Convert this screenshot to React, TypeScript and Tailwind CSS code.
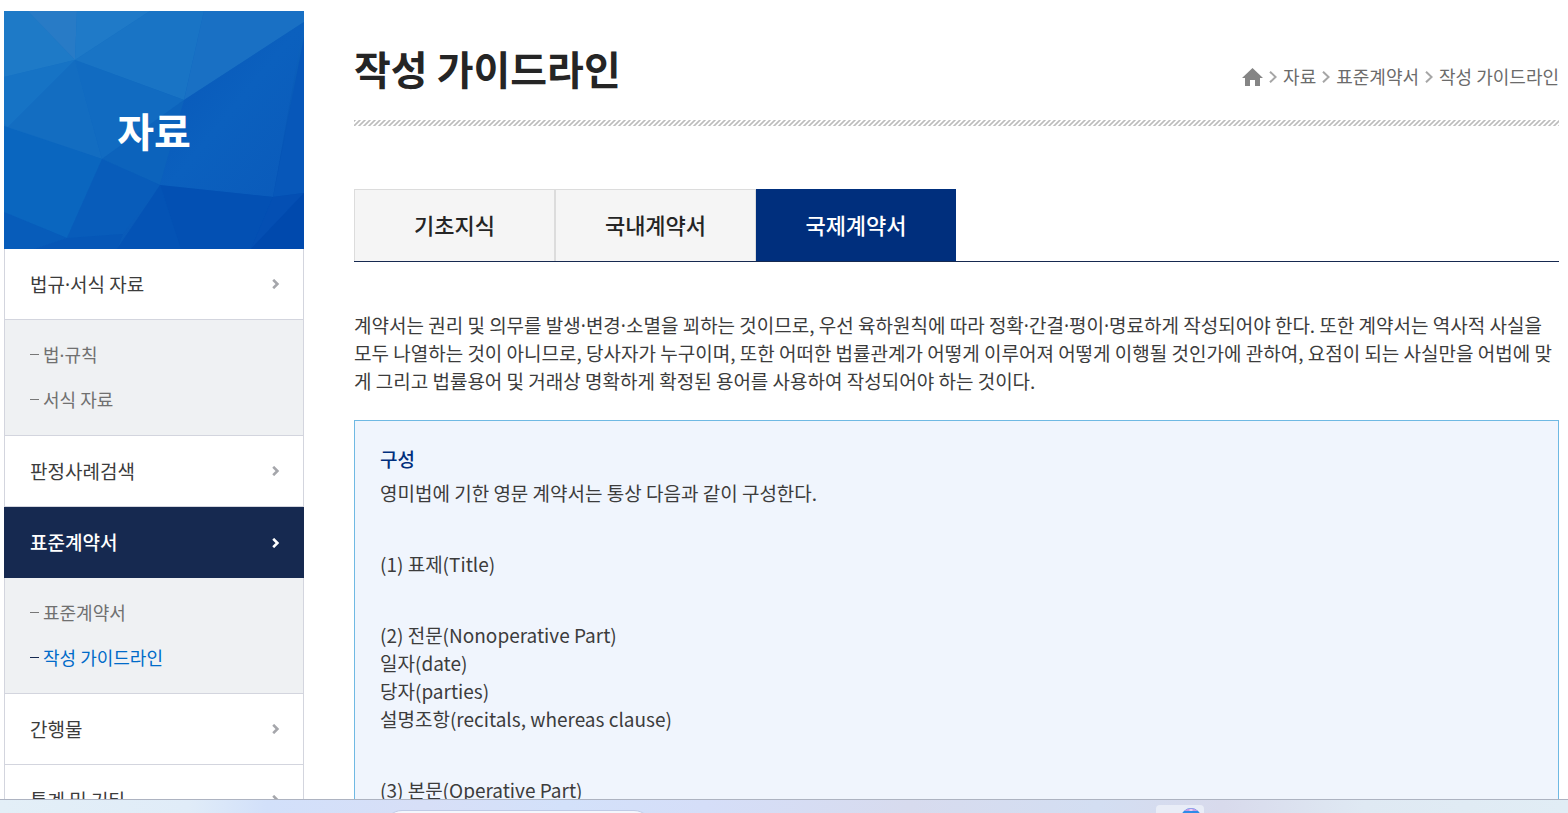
import React from "react";

type MenuItem = { label: string; active?: boolean; children?: { label: string; active?: boolean }[] };

const menu: MenuItem[] = [
  { label: "법규·서식 자료", children: [{ label: "법·규칙" }, { label: "서식 자료" }] },
  { label: "판정사례검색" },
  {
    label: "표준계약서",
    active: true,
    children: [{ label: "표준계약서" }, { label: "작성 가이드라인", active: true }],
  },
  { label: "간행물" },
  { label: "통계 및 기타" },
];

const tabs = [{ label: "기초지식" }, { label: "국내계약서" }, { label: "국제계약서", active: true }];

const intro =
  "계약서는 권리 및 의무를 발생·변경·소멸을 꾀하는 것이므로, 우선 육하원칙에 따라 정확·간결·평이·명료하게 작성되어야 한다. 또한 계약서는 역사적 사실을 모두 나열하는 것이 아니므로, 당사자가 누구이며, 또한 어떠한 법률관계가 어떻게 이루어져 어떻게 이행될 것인가에 관하여, 요점이 되는 사실만을 어법에 맞게 그리고 법률용어 및 거래상 명확하게 확정된 용어를 사용하여 작성되어야 하는 것이다.";

const sections = [
  ["(1) 표제(Title)"],
  ["(2) 전문(Nonoperative Part)", "일자(date)", "당자(parties)", "설명조항(recitals, whereas clause)"],
  ["(3) 본문(Operative Part)"],
];

// Sets the middle dot in a Latin face, whose dot is narrower than the Korean one.
function DotText({ text }: { text: string }) {
  return (
    <span>
      {text.split("·").map((part, i) => (
        <React.Fragment key={i}>
          {i > 0 && <span className="font-['Noto_Sans',sans-serif] leading-none">·</span>}
          {part}
        </React.Fragment>
      ))}
    </span>
  );
}

function BannerArt() {
  return (
    <svg className="absolute inset-0 h-full w-full" viewBox="0 0 300 238" preserveAspectRatio="none" aria-hidden="true">
      <defs>
        <linearGradient id="base" x1="0" y1="0" x2="1" y2="1">
          <stop offset="0" stopColor="#1b7ac8" />
          <stop offset="0.5" stopColor="#0d64be" />
          <stop offset="1" stopColor="#0048ae" />
        </linearGradient>
        <linearGradient id="right" x1="0" y1="0" x2="1" y2="1">
          <stop offset="0" stopColor="#0756b8" />
          <stop offset="0.5" stopColor="#0b60be" />
          <stop offset="1" stopColor="#0a5aba" />
        </linearGradient>
      </defs>
      <rect width="300" height="238" fill="url(#base)" />
      <path d="M0 0H24L71 49L0 66Z" fill="#1e7ac7" />
      <path d="M24 0H73L71 49Z" fill="#287bc6" />
      <path d="M73 0H146L71 49Z" fill="#1f7ac8" />
      <path d="M146 0H200L180 89L71 49Z" fill="#1974c5" />
      <path d="M200 0H300V11L180 89Z" fill="#1970c4" />
      <path d="M0 66L71 49L4 116L0 113Z" fill="#1673c5" />
      <path d="M71 49L98 148L4 116Z" fill="#136dc1" />
      <path d="M71 49L180 89L98 148Z" fill="#116bc1" />
      <path d="M180 89L156 174L98 148Z" fill="#0c63bc" />
      <path d="M180 89L300 11L269 186L156 174Z" fill="url(#right)" />
      <path d="M300 26V182L269 186Z" fill="#0757b9" />
      <path d="M0 115L98 148L63 227L0 201Z" fill="#0a66bf" />
      <path d="M98 148L156 174L119 223L63 227Z" fill="#085cba" />
      <path d="M0 201L63 227L30 238H0Z" fill="#075cba" />
      <path d="M63 227L119 223L113 238H30Z" fill="#0657b7" />
      <path d="M156 174L177 238H113Z" fill="#0453b5" />
      <path d="M156 174L269 186L247 238H177Z" fill="#0350b3" />
      <path d="M269 186L300 182L247 238Z" fill="#044fb3" />
      <path d="M300 182V238H247Z" fill="#0049ad" />
    </svg>
  );
}

function MenuArrow() {
  return (
    <svg width="8" height="10" viewBox="0 0 8 10" fill="none" stroke="currentColor" strokeWidth="2.6" aria-hidden="true">
      <path d="M1.2 0.8L5.4 5L1.2 9.2" />
    </svg>
  );
}

function Separator() {
  return (
    <svg width="8" height="12" viewBox="0 0 8 12" fill="none" stroke="#a6a6a6" strokeWidth="2" aria-hidden="true">
      <path d="M1 0.7L6.6 6L1 11.3" />
    </svg>
  );
}

function Sidebar() {
  return (
    <aside className="w-[300px] shrink-0">
      <div className="relative flex h-[238px] items-center justify-center">
        <BannerArt />
        <h2 className="relative text-[40px] leading-[48px] font-bold text-white">자료</h2>
      </div>
      <nav aria-label="자료">
        <ul>
          {menu.map((item) => (
            <li key={item.label}>
              <a
                href="#"
                className={
                  item.active
                    ? "flex h-[71px] items-center justify-between bg-[#162950] pr-6 pl-[26px] text-[19px] font-medium text-white"
                    : "flex h-[71px] items-center justify-between border-x border-b border-[#d3d5de] bg-white pr-[23px] pl-[25px] text-[19px] text-[#3c3c3c]"
                }
              >
                <DotText text={item.label} />
                <span className={item.active ? "text-white" : "text-[#a5a6ab]"}>
                  <MenuArrow />
                </span>
              </a>
              {item.children && (
                <ul className="border-x border-b border-[#d3d5de] bg-[#eff1f3] px-[25px] pt-3 pb-[13px]">
                  {item.children.map((child) => (
                    <li key={child.label}>
                      <a
                        href="#"
                        className={
                          child.active
                            ? "flex h-[45px] items-center gap-1 text-[#006bc9]"
                            : "flex h-[45px] items-center gap-1 text-[#707070]"
                        }
                      >
                        <span className={child.active ? "h-px w-[9px] bg-[#162950]" : "h-px w-[9px] bg-[#777]"} />
                        <DotText text={child.label} />
                      </a>
                    </li>
                  ))}
                </ul>
              )}
            </li>
          ))}
        </ul>
      </nav>
    </aside>
  );
}

function Breadcrumb() {
  return (
    <nav aria-label="현재 위치" className="mt-[18px] flex items-center gap-1.5 text-[#6b6b6b]">
      <a href="#" aria-label="홈">
        <svg width="21" height="18" viewBox="0 0 21 18" fill="#858585" aria-hidden="true">
          <path d="M10.5 0L21 10H18V18H13V12H8V18H3V10H0Z" />
        </svg>
      </a>
      <Separator />
      <a href="#">자료</a>
      <Separator />
      <a href="#">표준계약서</a>
      <Separator />
      <a href="#">작성 가이드라인</a>
    </nav>
  );
}

function Taskbar() {
  return (
    <footer className="flex h-3.5 shrink-0 items-start overflow-hidden border-t border-[#adb3c1] bg-[linear-gradient(90deg,#e3eff7_0%,#e0ecf8_12%,#d2e0fa_17%,#d7dff7_27%,#d3e1fa_36%,#d5def8_45%,#d7dbee_58%,#d3def2_70%,#d8daec_78%,#dfe9f3_87%,#e1edf5_100%)]">
      <div className="w-[24.5%] shrink-0" />
      <div className="mt-2.5 h-9 w-[268px] shrink-0 rounded-full border border-[#c0cbe6] bg-[#f3f7fd]" />
      <div className="flex-1" />
      <div className="mt-[5px] mr-[364px] flex h-10 w-12 shrink-0 justify-center rounded bg-[#e9edf7] pt-[3px] pl-[22px]">
        <svg width="20" height="20" viewBox="0 0 20 20" aria-hidden="true">
          <circle cx="10" cy="10" r="10" fill="#2e8be8" />
          <path d="M3 3A10 10 0 0 1 17 3Z" fill="#c79be6" />
          <path d="M8.5 1H11.5V3H8.5Z" fill="#e6d3f3" />
        </svg>
      </div>
    </footer>
  );
}

export default function App() {
  return (
    <div className="flex h-screen flex-col overflow-hidden bg-white font-['Noto_Sans_CJK_KR',sans-serif] text-[18px] text-[#3c3c3c]">
      <div className="flex min-h-0 flex-1 gap-[50px] overflow-hidden pt-[11px] pr-[9px] pl-1">
        <Sidebar />
        <main className="min-w-0 flex-1">
          <header className="flex h-[109px] items-center justify-between pt-1">
            <h1 className="text-[40px] leading-[60px] font-bold text-[#252525]">작성 가이드라인</h1>
            <Breadcrumb />
          </header>
          <svg className="block h-1.5 w-full" aria-hidden="true">
            <defs>
              <pattern id="hatch" width="5" height="6" patternUnits="userSpaceOnUse">
                <path d="M-6 7L2 -1M-1 7L7 -1M4 7L12 -1" stroke="#bdbdbd" strokeWidth="1.6" />
              </pattern>
            </defs>
            <rect width="100%" height="6" fill="url(#hatch)" />
          </svg>
          <div role="tablist" className="mt-[63px] flex h-[73px] border-b border-[#162950]">
            {tabs.map((tab) => (
              <button
                key={tab.label}
                type="button"
                role="tab"
                aria-selected={!!tab.active}
                className={
                  tab.active
                    ? "w-[200px] bg-[#002f7d] pb-0.5 text-[22px] font-medium text-white"
                    : "w-[201px] border-x border-t border-[#dcdcdc] bg-[#f5f5f5] pb-0.5 text-[22px] font-medium text-[#252525]"
                }
              >
                {tab.label}
              </button>
            ))}
          </div>
          <p className="mt-[49px] text-[19px] leading-7">
            <DotText text={intro} />
          </p>
          <section className="mt-[25px] border border-[#6fb9e3] bg-[#f0f5fd] px-[25px] py-6 text-[19px] leading-7">
            <h3 className="font-medium text-[#002f7d]">구성</h3>
            <p className="mt-1.5">영미법에 기한 영문 계약서는 통상 다음과 같이 구성한다.</p>
            {sections.map((lines) => (
              <div key={lines[0]} className="mt-[43px]">
                {lines.map((line) => (
                  <p key={line}>{line}</p>
                ))}
              </div>
            ))}
          </section>
        </main>
      </div>
      <Taskbar />
    </div>
  );
}
